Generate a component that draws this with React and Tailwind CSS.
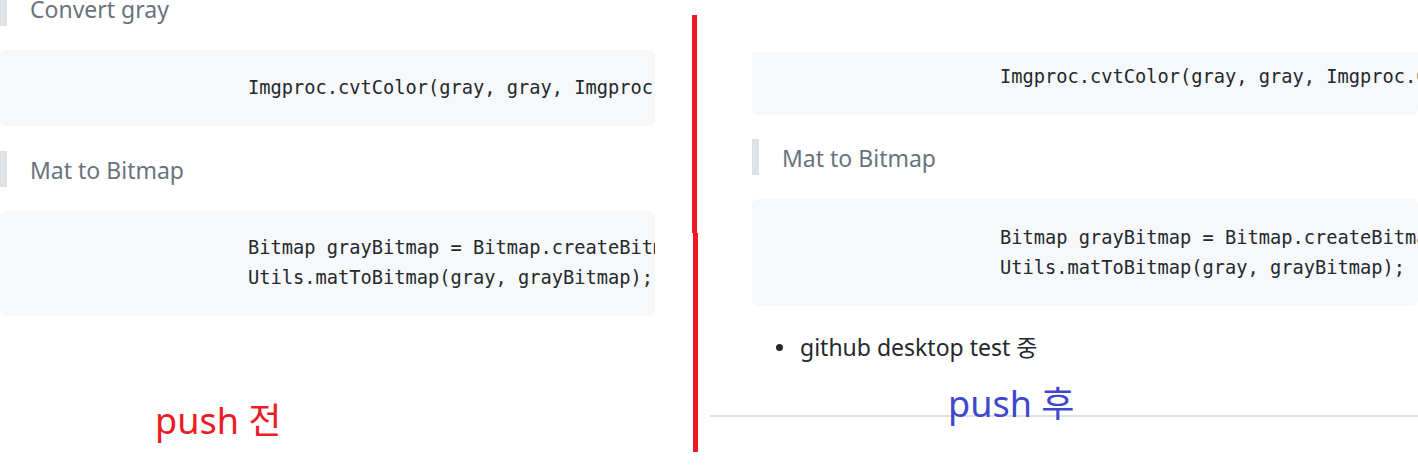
import React from 'react';

const sans = "font-['Noto_Sans','Noto_Sans_CJK_KR',sans-serif]";
const mono = "font-['DejaVu_Sans_Mono',monospace]";

// --- Quote-style heading (left border bar) ---
const SectionTitle = ({ children, className = '' }) => (
  <div className={`h-[36px] border-l-[7px] border-[#dfe2e5] pl-[23px] text-[23px] leading-[39px] text-[#6a737d] ${sans} ${className}`}>
    {children}
  </div>
);

// --- Code block ---
const CodeBlock = ({ lines, className = '' }) => (
  <div className={`bg-[#f6f8fa] pl-[248px] pb-[23px] text-[18.7px] leading-[30px] text-[#24292e] whitespace-pre overflow-hidden ${mono} ${className}`}>
    {lines.map((line, i) => (
      <div key={i}>{line}</div>
    ))}
  </div>
);

const bitmapLines = [
  'Bitmap grayBitmap = Bitmap.createBitmap(gray.cols(), gray.rows(), null);',
  'Utils.matToBitmap(gray, grayBitmap);',
];

export default function App() {
  return (
    <div className="w-[1418px] h-[476px] bg-white overflow-hidden flex">
      {/* --- Before push --- */}
      <div className="w-[655px] shrink-0 overflow-hidden flex flex-col">
        <SectionTitle className="-mt-[10px]">Convert gray</SectionTitle>
        <CodeBlock
          className="mt-[24px] pt-[23px] rounded-[6px]"
          lines={['Imgproc.cvtColor(gray, gray, Imgproc.COLOR_RGBA2GRAY);']}
        />
        <SectionTitle className="mt-[25px]">Mat to Bitmap</SectionTitle>
        <CodeBlock className="mt-[24px] pt-[22px] rounded-[6px]" lines={bitmapLines} />
        <div className={`mt-[87px] pl-[155px] text-[36px] leading-none text-[#ed1c24] ${sans}`}>
          push 전
        </div>
      </div>

      {/* --- Divider drawn in red --- */}
      <div className="w-[37px] shrink-0" />
      <div className="w-[6px] shrink-0 pt-[15px] flex flex-col">
        <div className="w-[5px] h-[218px] bg-[#ed1c24]" />
        <div className="w-[5px] h-[219px] ml-[1px] bg-[#ed1c24]" />
      </div>
      <div className="w-[12px] shrink-0" />

      {/* --- After push --- */}
      <div className="relative flex-1 overflow-hidden flex flex-col pt-[52px]">
        <div className="pl-[42px] flex flex-col">
          <CodeBlock
            className="pt-[10px] rounded-b-[6px]"
            lines={['Imgproc.cvtColor(gray, gray, Imgproc.COLOR_RGBA2GRAY);']}
          />
          <SectionTitle className="mt-[24px]">Mat to Bitmap</SectionTitle>
          <CodeBlock className="mt-[24px] pt-[24px] rounded-[6px]" lines={bitmapLines} />
          <div className={`mt-[25px] pl-[24px] flex items-center gap-[17px] text-[23px] leading-[32px] text-[#24292e] ${sans}`}>
            <span className="w-[7px] h-[7px] rounded-full bg-[#24292e]" />
            <span>github desktop test 중</span>
          </div>
        </div>
        <div className="mt-[52px] h-[2px] bg-[#dfe2e5]" />
        <div className={`absolute left-[238px] top-[386px] text-[36px] leading-none text-[#3f48cc] ${sans}`}>
          push 후
        </div>
      </div>
    </div>
  );
}
